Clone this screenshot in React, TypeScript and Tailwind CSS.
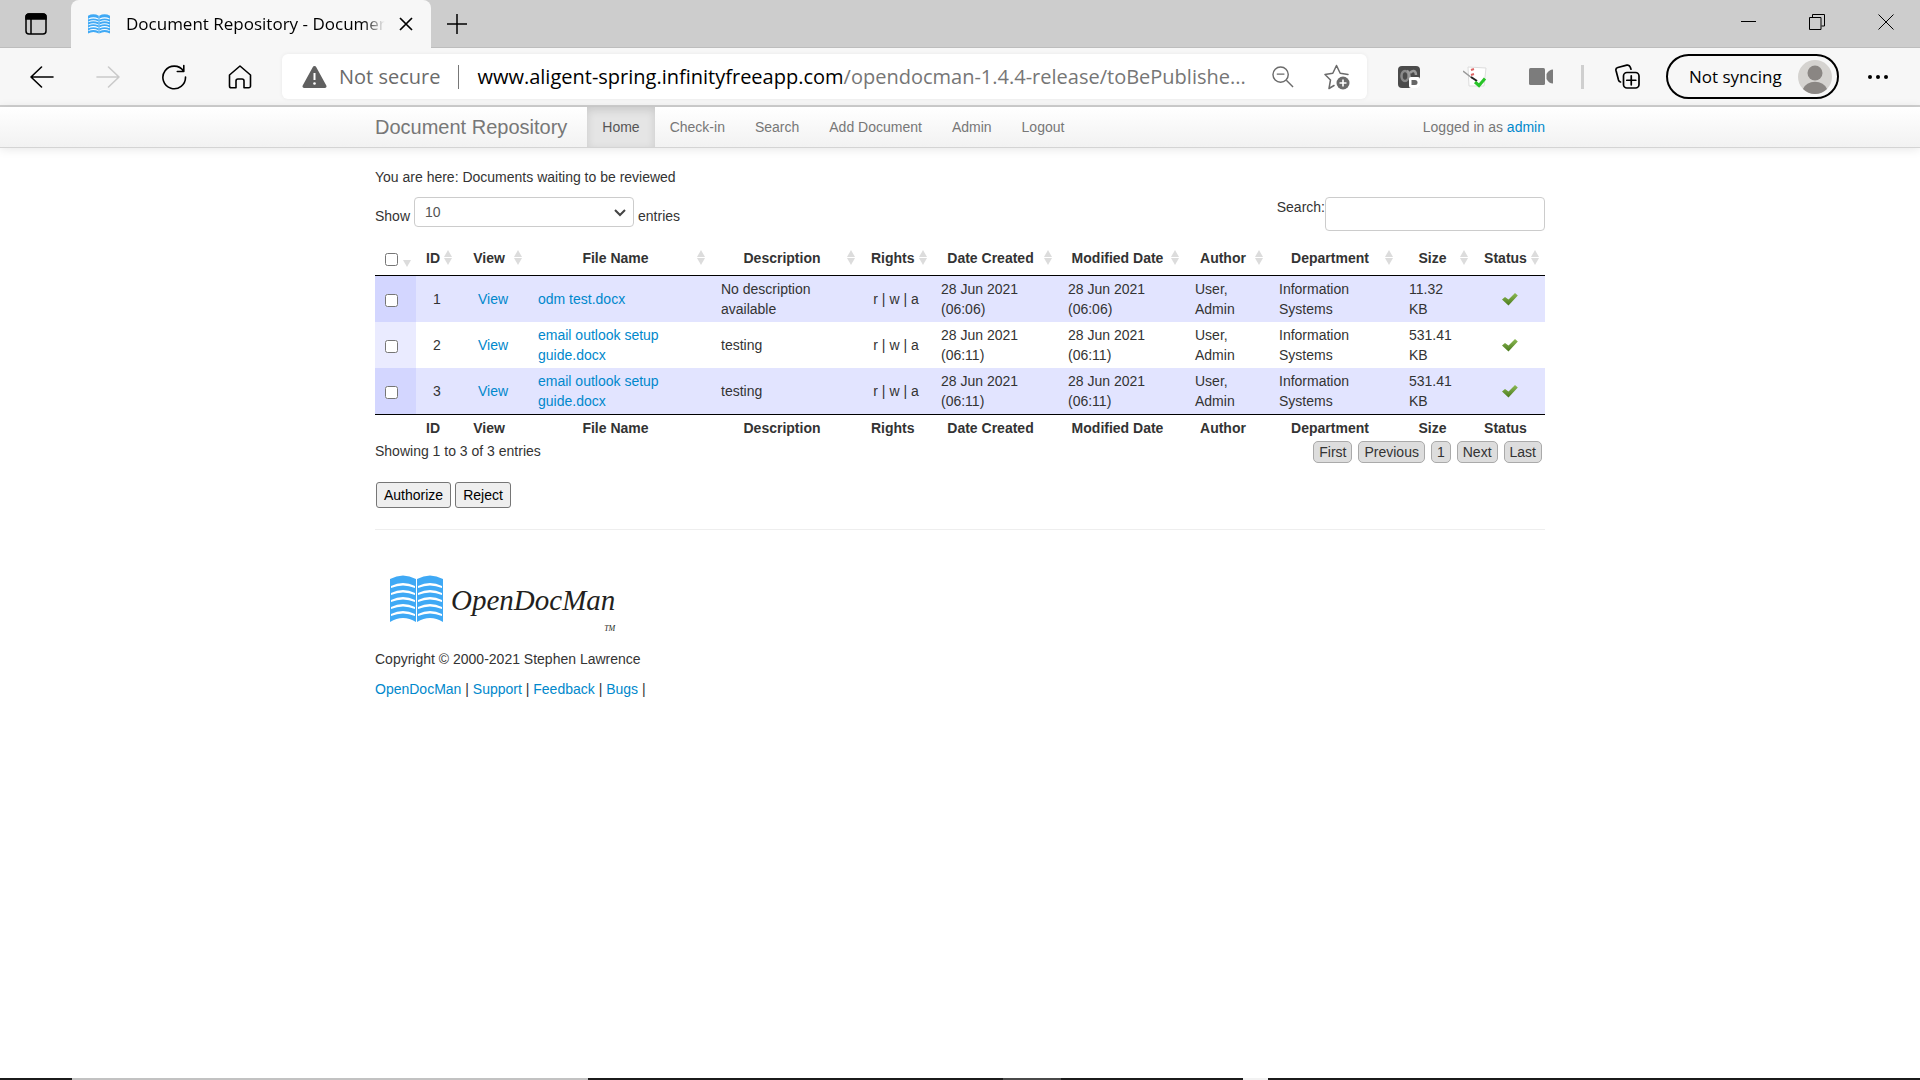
import type { ReactNode } from "react";
import { clsx } from "clsx";

const uiFont = "font-['Open_Sans','Noto_Sans',sans-serif]";
const pageFont = "font-['Liberation_Sans',Arial,sans-serif]";

const navItems = ["Home", "Check-in", "Search", "Add Document", "Admin", "Logout"];

const columns = [
  { label: "ID", width: "w-[42px]" },
  { label: "View", width: "w-[70px]" },
  { label: "File Name", width: "w-[183px]" },
  { label: "Description", width: "w-[150px]" },
  { label: "Rights", width: "w-[70px]" },
  { label: "Date Created", width: "w-[127px]" },
  { label: "Modified Date", width: "w-[127px]" },
  { label: "Author", width: "w-[84px]" },
  { label: "Department", width: "w-[130px]" },
  { label: "Size", width: "w-[75px]" },
  { label: "Status", width: "w-[71px]" },
];

interface DocumentRow {
  id: number;
  name: string;
  description: string;
  date: string;
  size: string;
}

const documents: DocumentRow[] = [
  { id: 1, name: "odm test.docx", description: "No description available", date: "28 Jun 2021 (06:06)", size: "11.32 KB" },
  { id: 2, name: "email outlook setup guide.docx", description: "testing", date: "28 Jun 2021 (06:11)", size: "531.41 KB" },
  { id: 3, name: "email outlook setup guide.docx", description: "testing", date: "28 Jun 2021 (06:11)", size: "531.41 KB" },
];

const pages = ["First", "Previous", "1", "Next", "Last"];
const footerLinks = ["OpenDocMan", "Support", "Feedback", "Bugs"];

function IconButton({ label, className, children }: { label: string; className?: string; children: ReactNode }) {
  return (
    <button type="button" aria-label={label} className={clsx("flex shrink-0 items-center justify-center", className)}>
      {children}
    </button>
  );
}

function BookIcon({ className }: { className?: string }) {
  return (
    <svg viewBox="0 0 53 48" preserveAspectRatio="none" className={className}>
      <path d="M0 4Q13-3 26 4V47Q13 39 0 47ZM27 4Q40-3 53 4V47Q40 39 27 47Z" fill="#3fa9f5" />
      {[11, 18, 25, 32, 39].map((y) => (
        <path
          key={y}
          d={`M1 ${y}Q13 ${y - 6} 25 ${y}V${y + 2}Q13 ${y - 3} 1 ${y + 2}ZM28 ${y}Q40 ${y - 6} 52 ${y}V${y + 2}Q40 ${y - 3} 28 ${y + 2}Z`}
          fill="#fff"
        />
      ))}
    </svg>
  );
}

function TabStrip() {
  return (
    <div className="flex h-12 bg-[#cdcdcd] shadow-[inset_0_-1px_0_#bdbdbd]">
      <IconButton label="Tab actions" className="w-[71px]">
        <svg width="22" height="22" viewBox="0 0 22 22" fill="none" stroke="#000" strokeWidth="1.5">
          <rect x="1" y="1" width="20" height="20" rx="3" />
          <path d="M1 4a3 3 0 0 1 3-3h14a3 3 0 0 1 3 3v2H1Z" fill="#000" />
          <path d="M6 6v15" />
        </svg>
      </IconButton>
      <div className="flex w-[360px] items-center rounded-t-lg bg-[#f7f7f7] pl-[17px] pr-2">
        <BookIcon className="h-5 w-[22px] shrink-0" />
        <span
          className={clsx(
            "ml-4 w-[264px] whitespace-nowrap text-[17px] text-black [mask-image:linear-gradient(to_right,#000_90%,transparent_98%)]",
            uiFont,
          )}
        >
          Document Repository - Documen
        </span>
        <IconButton label="Close tab" className="h-8 w-8">
          <svg width="14" height="14" viewBox="0 0 14 14" stroke="#000" strokeWidth="1.7">
            <path d="M1 1l12 12M13 1L1 13" />
          </svg>
        </IconButton>
      </div>
      <IconButton label="New tab" className="w-[52px]">
        <svg width="22" height="22" viewBox="0 0 22 22" stroke="#000" strokeWidth="1.5">
          <path d="M11 1v20M1 11h20" />
        </svg>
      </IconButton>
      <div className="ml-auto flex h-[43px]">
        <IconButton label="Minimize" className="w-[68px]">
          <svg width="16" height="16" viewBox="0 0 16 16" stroke="#000">
            <path d="M0 7.500h15" />
          </svg>
        </IconButton>
        <IconButton label="Restore" className="w-[68px]">
          <svg width="16" height="16" viewBox="0 0 16 16" fill="none" stroke="#000">
            <path d="M.5 3.500h11.500v12H.5ZM3.500 3V.5h12v11.500h-3" />
          </svg>
        </IconButton>
        <IconButton label="Close window" className="w-[69px]">
          <svg width="16" height="16" viewBox="0 0 16 16" stroke="#000">
            <path d="M.5.5l15 15M15.500.5l-15 15" />
          </svg>
        </IconButton>
      </div>
    </div>
  );
}

function AddressBar() {
  return (
    <div className="flex h-[45px] min-w-0 flex-1 items-center rounded-md bg-white pl-5 pr-[14px] shadow-[0_0_4px_rgba(0,0,0,0.06)]">
      <svg width="25" height="22" viewBox="0 0 25 22" className="shrink-0">
        <path d="M10.700 1.200a2 2 0 0 1 3.600 0l10 18.300a1.700 1.700 0 0 1-1.500 2.500H2.200a1.700 1.700 0 0 1-1.500-2.500Z" fill="#606060" />
        <path d="M12.500 7v7" stroke="#fff" strokeWidth="2" />
        <circle cx="12.500" cy="17.500" r="1.300" fill="#fff" />
      </svg>
      <span className={clsx("ml-3 whitespace-nowrap text-[20px] text-[#6b6b6b]", uiFont)}>Not secure</span>
      <span className="ml-[18px] h-6 w-px shrink-0 bg-[#777]" />
      <span className={clsx("ml-[18px] truncate text-[20px] text-[#767676]", uiFont)}>
        <span className="text-black">www.aligent-spring.infinityfreeapp.com</span>
        /opendocman-1.4.4-release/toBePublishe...
      </span>
      <IconButton label="Zoom out" className="ml-auto h-8 w-8">
        <svg width="22" height="22" viewBox="0 0 23 23" fill="none" stroke="#6b6b6b" strokeWidth="1.500">
          <circle cx="9" cy="9" r="8" />
          <path d="M15 15l7 7M5 8.500h8" />
        </svg>
      </IconButton>
      <IconButton label="Add to favorites" className="ml-[22px] h-8 w-8">
        <svg width="26" height="26" viewBox="0 0 26 26" fill="none">
          <path
            d="M10 21.500L5 24.500 6.500 16 1 10.500l7.800-1.200L12.500 1.500l3.700 7.800 7.800 1.200"
            stroke="#6b6b6b"
            strokeWidth="1.500"
            strokeLinejoin="round"
            strokeLinecap="round"
          />
          <circle cx="19" cy="19" r="6.500" fill="#6b6b6b" />
          <path d="M19 15.500v7M15.500 19h7" stroke="#fff" strokeWidth="1.600" />
        </svg>
      </IconButton>
    </div>
  );
}

function Toolbar() {
  return (
    <div className="flex h-[59px] items-center border-b-2 border-[#d0d0d0] bg-[#f7f7f7] pl-[22px]">
      <div className="mr-[22px] flex gap-[26px]">
        <IconButton label="Back" className="h-10 w-10">
          <svg width="24" height="22" viewBox="0 0 24 22" fill="none" stroke="#000" strokeWidth="1.600" strokeLinecap="round" strokeLinejoin="round">
            <path d="M11.500 1L1 11l10.500 10M1 11h22" />
          </svg>
        </IconButton>
        <IconButton label="Forward" className="h-10 w-10">
          <svg width="24" height="22" viewBox="0 0 24 22" fill="none" stroke="#cacaca" strokeWidth="1.600" strokeLinecap="round" strokeLinejoin="round">
            <path d="M12.500 1L23 11 12.500 21M23 11H1" />
          </svg>
        </IconButton>
        <IconButton label="Refresh" className="h-10 w-10">
          <svg width="26" height="26" viewBox="0 0 26 26" fill="none" stroke="#000" strokeWidth="1.600" strokeLinecap="round" strokeLinejoin="round">
            <path d="M22.500 7A11.300 11.300 0 1 0 24.500 13M22.800 1.500v6h-6.500" />
          </svg>
        </IconButton>
        <IconButton label="Home" className="h-10 w-10">
          <svg width="24" height="24" viewBox="0 0 24 24" fill="none" stroke="#000" strokeWidth="1.600" strokeLinejoin="round">
            <path d="M1.500 10L12 1l10.500 9v11a1.800 1.800 0 0 1-1.800 1.800H16V16a2 2 0 0 0-2-2h-4a2 2 0 0 0-2 2v6.800H3.300A1.800 1.800 0 0 1 1.500 21Z" />
          </svg>
        </IconButton>
      </div>
      <AddressBar />
      <div className="ml-[22px] flex items-center gap-[26px]">
        <IconButton label="Password extension" className="h-10 w-10">
          <svg width="22" height="22" viewBox="0 0 22 22" fill="none">
            <rect width="22" height="22" rx="4" fill="#4b4b4b" />
            <ellipse cx="7" cy="10" rx="3.500" ry="5" stroke="#8a8a8a" strokeWidth="2.500" />
            <path d="M9 5c4 1 1 10 5 10M12 7c2-3 6-3 6 2" stroke="#9a9a9a" strokeWidth="2.500" />
            <rect x="11" y="11" width="11" height="11" rx="2" fill="#fff" />
            <path d="M13.500 14h3.500a2.500 2.500 0 0 1 0 5h-3.500Z" fill="#666" />
          </svg>
        </IconButton>
        <IconButton label="Checklist extension" className="h-10 w-10">
          <svg width="24" height="22" viewBox="0 0 24 22" fill="none">
            <path d="M5 1l18 1-2 18H6Z" fill="#fff" stroke="#ddd" />
            <path d="M8 4l3-1M8 9l3-1" stroke="#d66" strokeWidth="2" />
            <path d="M0 5l9 7" stroke="#999" strokeWidth="1.500" />
            <path d="M8 11l6 4" stroke="#222" strokeWidth="2" />
            <path d="M12 16l4 3.500 6-7" stroke="#28c428" strokeWidth="3" />
          </svg>
        </IconButton>
        <IconButton label="Camera extension" className="h-10 w-10">
          <svg width="24" height="17" viewBox="0 0 24 17" fill="#7c7c7c">
            <rect width="16" height="17" rx="1.500" />
            <path d="M17.500 6Q20 1.500 24 1.500v14Q20 15.500 17.500 11Z" />
          </svg>
        </IconButton>
      </div>
      <span className="ml-5 h-6 w-[3px] bg-[#cfcfcf]" />
      <IconButton label="Collections" className="ml-[23px] h-10 w-10">
        <svg width="25" height="25" viewBox="0 0 25 25" fill="none" stroke="#000" strokeWidth="1.700" strokeLinecap="round">
          <path d="M5.500 18a3 3 0 0 1-2-2L1 6.500a2.500 2.500 0 0 1 1.800-3l9-2.300a3 3 0 0 1 3.500 2l.7 2" />
          <rect x="8.500" y="8.500" width="15.500" height="15.500" rx="3.500" />
          <path d="M16.250 11.800v9M11.800 16.250h9" />
        </svg>
      </IconButton>
      <button
        type="button"
        className={clsx(
          "ml-[19px] flex h-[45px] w-[173px] shrink-0 items-center justify-between whitespace-nowrap rounded-full border-2 border-black pl-[21px] pr-[5px] text-[17px] text-black",
          uiFont,
        )}
      >
        Not syncing
        <svg width="34" height="34" viewBox="0 0 34 34">
          <circle cx="17" cy="17" r="17" fill="#d5d3d0" />
          <circle cx="17" cy="13" r="7.500" fill="#8a8683" />
          <path d="M5 29a12.500 10 0 0 1 24 0 17 17 0 0 1-24 0Z" fill="#8a8683" />
        </svg>
      </button>
      <IconButton label="Settings and more" className="ml-[19px] mr-[22px] h-10 w-10">
        <svg width="20" height="4" viewBox="0 0 20 4">
          <circle cx="2" cy="2" r="2" />
          <circle cx="10" cy="2" r="2" />
          <circle cx="18" cy="2" r="2" />
        </svg>
      </IconButton>
    </div>
  );
}

function Navbar() {
  return (
    <nav className="h-[41px] border-b border-[#d4d4d4] bg-linear-to-b from-white to-[#f2f2f2] shadow-[0_1px_10px_rgba(0,0,0,0.1)]">
      <div className="mx-auto flex h-10 max-w-[1170px] text-sm text-[#777]">
        <a href="#" className="pr-5 text-[20px] leading-10">
          Document Repository
        </a>
        {navItems.map((item) => (
          <a
            key={item}
            href="#"
            className={clsx(
              "px-[15px] leading-10",
              item === "Home" && "bg-[#e5e5e5] text-[#555] shadow-[inset_0_3px_8px_rgba(0,0,0,0.125)]",
            )}
          >
            {item}
          </a>
        ))}
        <p className="ml-auto leading-10">
          Logged in as <a href="#" className="text-[#0088cc]">admin</a>
        </p>
      </div>
    </nav>
  );
}

function SortIcon({ descOnly }: { descOnly?: boolean }) {
  return (
    <svg width="8" height="15" viewBox="0 0 8 15" fill="#dcdcdc">
      {!descOnly && <path d="M0 7l4-7 4 7Z" />}
      <path d="M0 8l4 7 4-7Z" />
    </svg>
  );
}

function CheckMark() {
  return (
    <svg width="16" height="13" viewBox="0 0 16 13" className="inline-block">
      <defs>
        <linearGradient id="tick" x1="0" y1="0" x2="0" y2="1">
          <stop offset="0" stopColor="#8dbb55" />
          <stop offset="1" stopColor="#4a7a1c" />
        </linearGradient>
      </defs>
      <path d="M0 6.500L3 4l3.500 2.500L13 0l2.800 2.500L6.500 12.500Z" fill="url(#tick)" />
    </svg>
  );
}

function DocumentsTable() {
  return (
    <table className="w-full table-fixed border-collapse">
      <thead>
        <tr className="h-[34px] border-b border-black">
          <th className="w-[41px]">
            <div className="flex items-center justify-between pl-[10px] pr-[5px] pt-1">
              <input type="checkbox" aria-label="Select all" className="h-[13px] w-[13px]" />
              <SortIcon descOnly />
            </div>
          </th>
          {columns.map((col) => (
            <th key={col.label} className={col.width}>
              <div className="flex items-center pl-[10px] pr-1.5">
                <span className="flex-1 whitespace-nowrap text-center">{col.label}</span>
                <span className="ml-1 flex w-2 shrink-0">
                  <SortIcon />
                </span>
              </div>
            </th>
          ))}
        </tr>
      </thead>
      <tbody>
        {documents.map((doc, i) => (
          <tr key={doc.id} className={clsx("h-[46px] *:px-[10px] *:py-[3px]", i % 2 === 0 ? "bg-[#e2e4ff]" : "bg-white")}>
            <td className={i % 2 === 0 ? "bg-[#d3d6ff]" : "bg-[#eaebff]"}>
              <input type="checkbox" aria-label={`Select document ${doc.id}`} className="mt-1 block h-[13px] w-[13px]" />
            </td>
            <td className="text-center">{doc.id}</td>
            <td className="text-center">
              <a href="#" className="text-[#0088cc]">View</a>
            </td>
            <td>
              <a href="#" className="text-[#0088cc]">{doc.name}</a>
            </td>
            <td>{doc.description}</td>
            <td className="whitespace-nowrap text-center">r | w | a</td>
            <td>{doc.date}</td>
            <td>{doc.date}</td>
            <td>User, Admin</td>
            <td>Information Systems</td>
            <td>{doc.size}</td>
            <td className="text-center">
              <CheckMark />
            </td>
          </tr>
        ))}
      </tbody>
      <tfoot>
        <tr className="h-[27px] border-t border-black">
          <td />
          {columns.map((col) => (
            <th key={col.label} className="whitespace-nowrap pl-[10px] pr-[18px]">
              {col.label}
            </th>
          ))}
        </tr>
      </tfoot>
    </table>
  );
}

function Taskbar() {
  return (
    <div className="flex h-0.5 bg-[#1b1b1b]">
      <span className="w-[3.75%]" />
      <span className="w-[26.9%] bg-[#c2c2c2]" />
      <span className="w-[21.6%]" />
      <span className="w-[3%] bg-[#4a4a4a]" />
      <span className="w-[9.5%]" />
      <span className="w-[1.3%] bg-[#f2f2f2]" />
    </div>
  );
}

export default function App() {
  return (
    <div className={clsx("flex min-h-screen flex-col bg-white", pageFont)}>
      <TabStrip />
      <Toolbar />
      <Navbar />
      <main className="mx-auto w-full max-w-[1170px] flex-1 pt-[19px] text-sm leading-5 text-[#333]">
        <p>You are here: Documents waiting to be reviewed</p>
        <div className="mt-[10px] flex h-11 items-start justify-between">
          <label className="flex items-start gap-1">
            <span className="pt-[9px]">Show</span>
            <span className="relative">
              <select className="block h-[30px] w-[220px] appearance-none rounded border border-[#ccc] bg-white px-[10px] text-[#555]">
                <option>10</option>
              </select>
              <svg
                width="12"
                height="8"
                viewBox="0 0 12 8"
                fill="none"
                stroke="#444"
                strokeWidth="2"
                className="pointer-events-none absolute right-2 top-3"
              >
                <path d="M1 1l5 5 5-5" />
              </svg>
            </span>
            <span className="pt-[9px]">entries</span>
          </label>
          <label className="flex">
            Search:
            <input type="search" className="h-[34px] w-[220px] rounded border border-[#ccc] px-1.5" />
          </label>
        </div>
        <DocumentsTable />
        <div className="flex justify-between">
          <p>Showing 1 to 3 of 3 entries</p>
          <div className="mr-[3px] flex gap-1.5">
            {pages.map((page) => (
              <button key={page} type="button" className="h-[22px] rounded-[5px] border border-[#aaa] bg-[#ddd] px-[5px]">
                {page}
              </button>
            ))}
          </div>
        </div>
        <div className="ml-px mt-[19px] flex gap-1 text-black">
          <button type="button" className="h-[26px] rounded-[3px] border border-[#767676] bg-[#efefef] px-[7px]">
            Authorize
          </button>
          <button type="button" className="h-[26px] rounded-[3px] border border-[#767676] bg-[#efefef] px-[7px]">
            Reject
          </button>
        </div>
        <hr className="mt-[21px] border-[#eee]" />
        <footer>
          <a href="#" className="ml-[15px] mt-[45px] flex h-[64px] items-start gap-2 text-[#231f20]">
            <BookIcon className="h-12 w-[53px]" />
            <span className="flex flex-col items-end font-['Liberation_Serif',serif] italic">
              <span className="text-[29px] leading-[50px]">OpenDocMan</span>
              <span className="text-[8px] leading-2">TM</span>
            </span>
          </a>
          <p className="mt-[10px]">Copyright © 2000-2021 Stephen Lawrence</p>
          <p className="mt-[10px]">
            {footerLinks.map((link) => (
              <span key={link}>
                <a href="#" className="text-[#0088cc]">{link}</a> |{" "}
              </span>
            ))}
          </p>
        </footer>
      </main>
      <Taskbar />
    </div>
  );
}
